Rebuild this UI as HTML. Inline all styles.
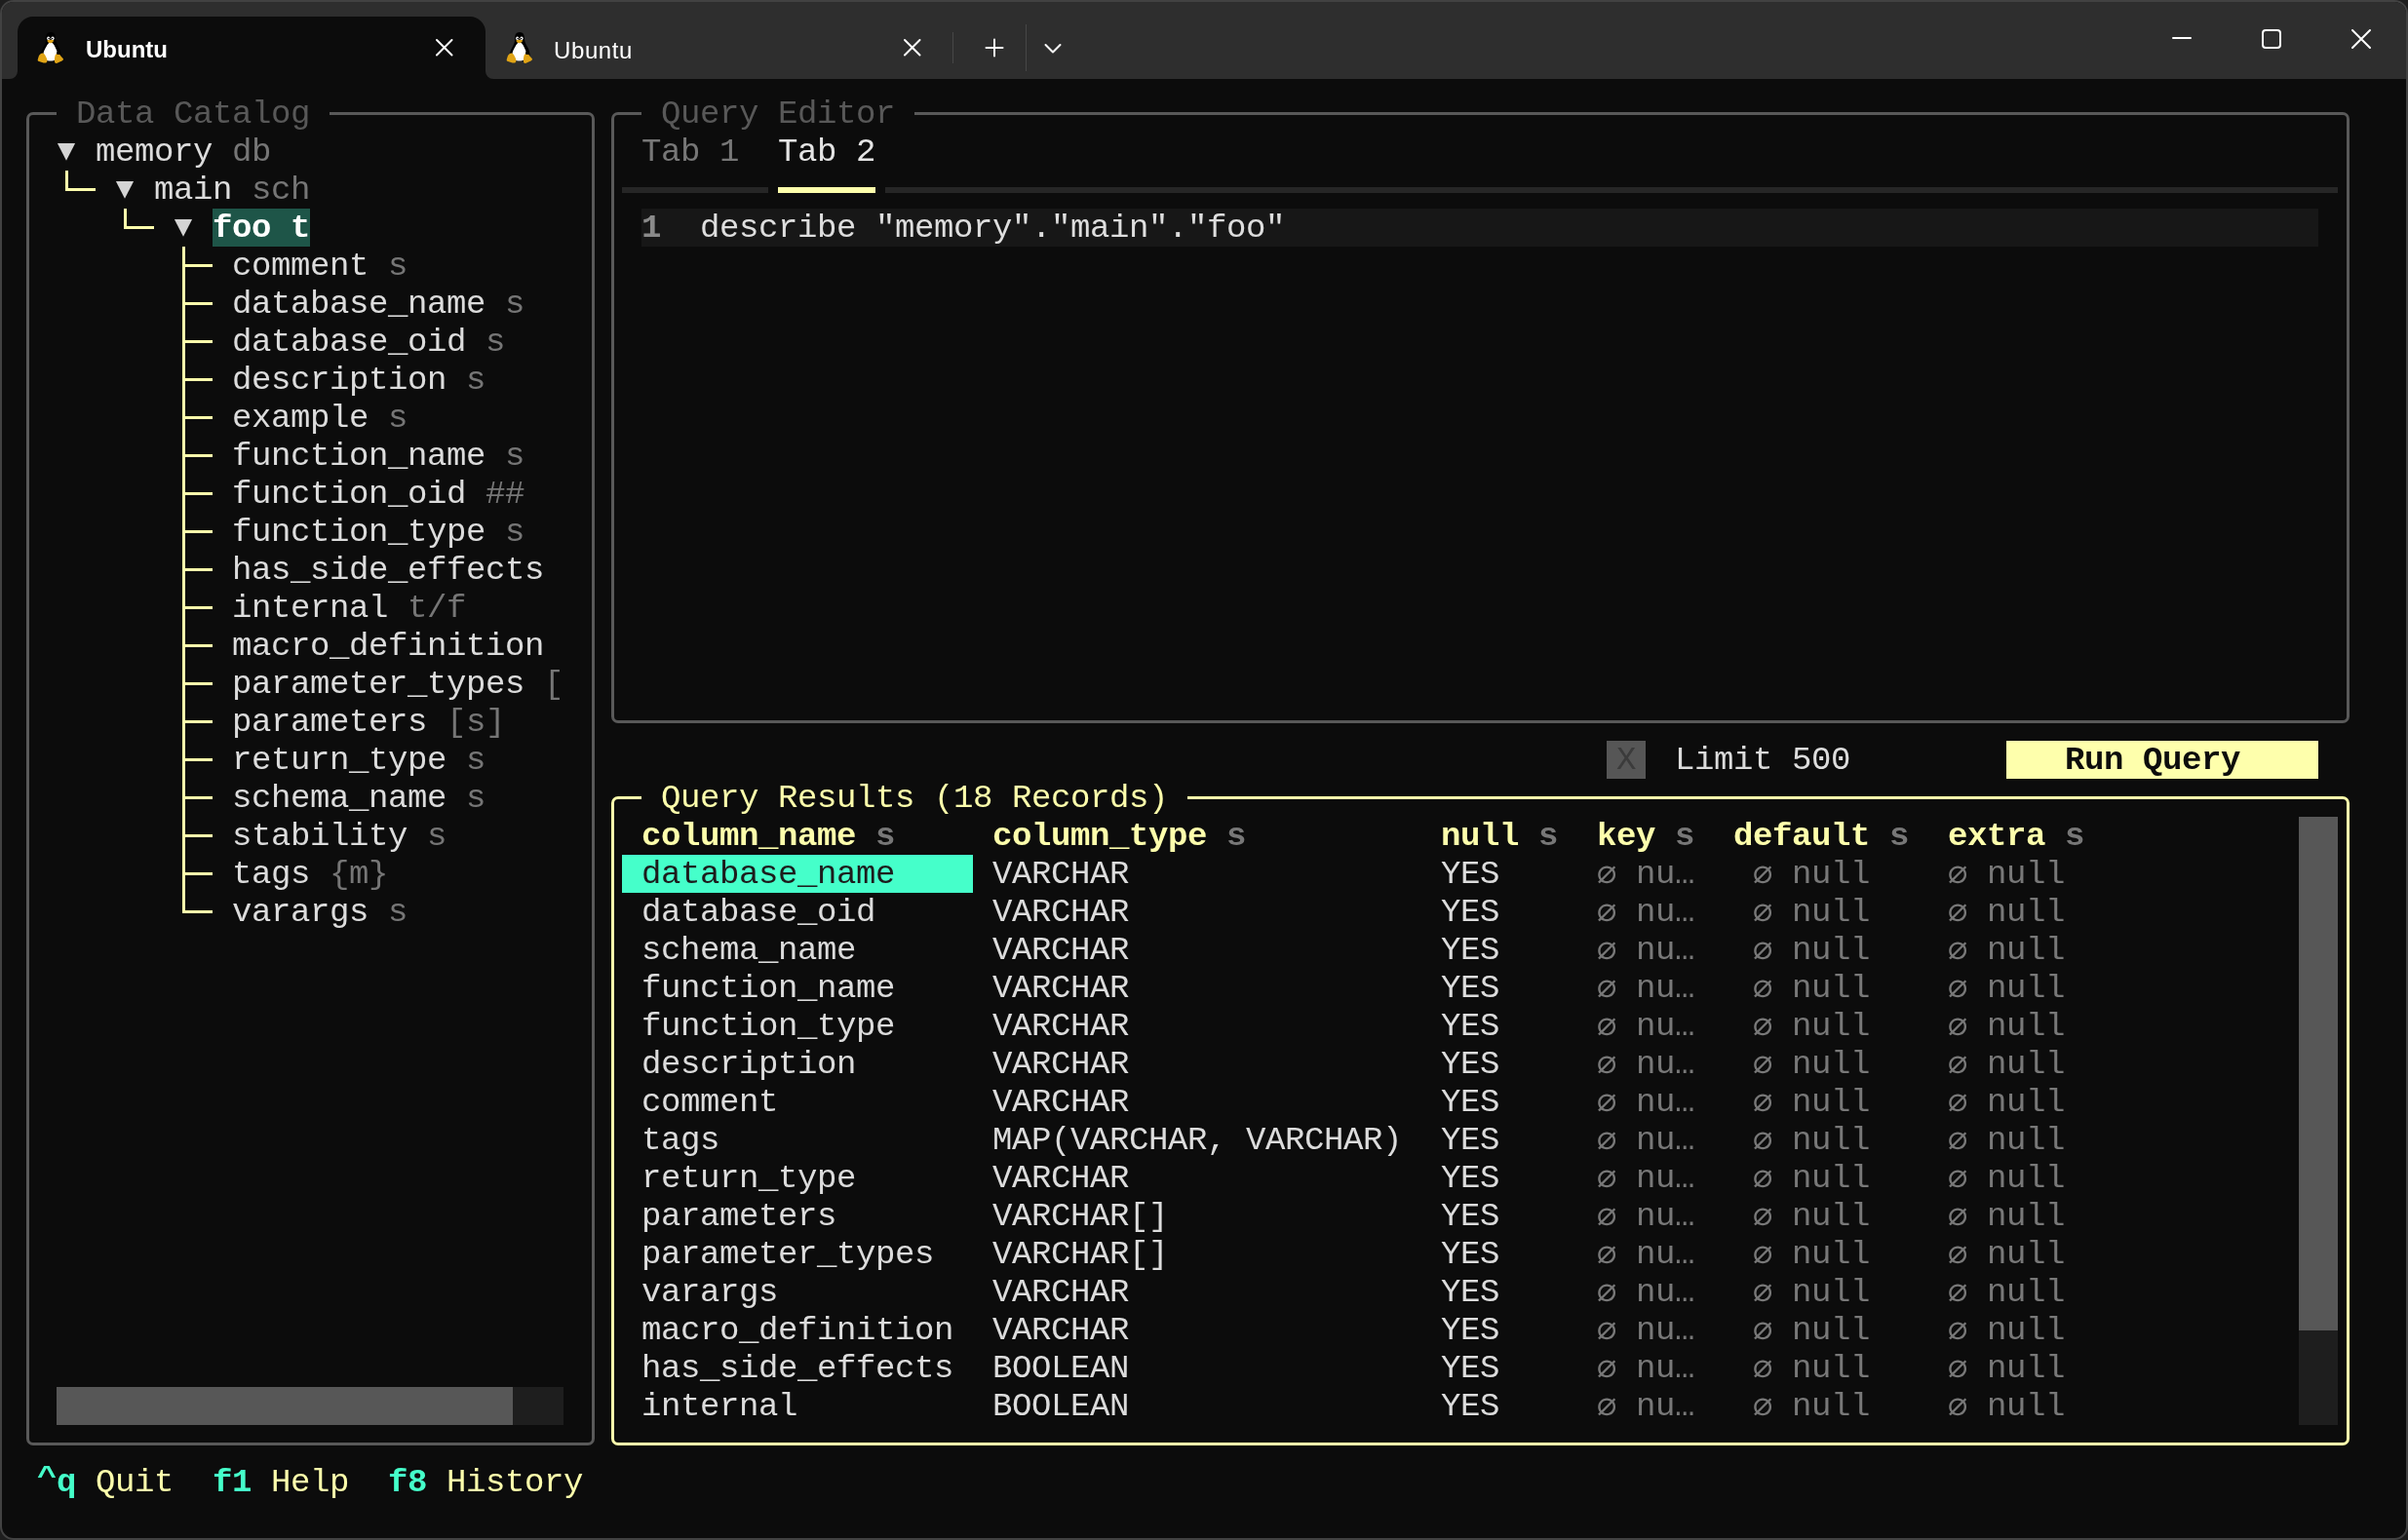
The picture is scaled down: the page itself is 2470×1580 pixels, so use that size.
<!DOCTYPE html>
<html lang="en"><head><meta charset="utf-8"><title>Ubuntu</title>
<style>
html,body{margin:0;padding:0;background:#1e1e1e;}
body{width:2470px;height:1580px;position:relative;overflow:hidden}
#win{position:absolute;left:0;top:0;width:2466px;height:1576px;border:2px solid #424242;border-radius:14px;background:#0c0c0c;overflow:hidden}
#in{position:absolute;left:-2px;top:-2px;width:2470px;height:1580px;will-change:transform}
.r{position:absolute;display:block}
.t{position:absolute;white-space:pre;font-family:"Liberation Mono","DejaVu Sans Mono",monospace;font-size:34px;letter-spacing:-0.4033px;line-height:39px;height:39px;padding-top:0}
.b{font-weight:bold}
.ui{position:absolute;white-space:pre;font-family:"Liberation Sans",sans-serif;font-size:24px;line-height:28px;color:#fff}
</style></head><body>
<div id="win"><div id="in">
<div class="r" style="left:0;top:0;width:2470px;height:81px;background:#2e2e2e"></div>
<div class="r" style="left:18px;top:17px;width:480px;height:70px;background:#0c0c0c;border-radius:16px 16px 0 0"></div>
<svg class="r" style="left:10px;top:73px" width="8" height="8" viewBox="0 0 8 8"><path d="M8 0 L8 8 L0 8 A8 8 0 0 0 8 0 Z" fill="#0c0c0c"/></svg>
<svg class="r" style="left:498px;top:73px" width="8" height="8" viewBox="0 0 8 8"><path d="M0 0 L0 8 L8 8 A8 8 0 0 1 0 0 Z" fill="#0c0c0c"/></svg>
<svg class="r" style="left:36px;top:32px" width="32" height="34" viewBox="0 0 32 34">
<path d="M16 1 C12.5 1 11 3.8 11.2 7.5 C11.4 10.5 10.5 12.5 9 15.5 C7 19 5.3 23 6 27 L12 31 L21 31 L26.5 26.5 C26.9 22 25.5 18.5 23.6 15.5 C22 12.5 21 10.5 21 7.5 C21 3.8 19.5 1 16 1 Z" fill="#000"/>
<path d="M16 11.3 C13 12 11.5 16 9.3 20 C7.8 23.5 8.3 27.5 11 29.5 C13 31 19 31 21 29 C23.5 26.5 23.3 22.5 22 19.5 C20.5 16 19 12 16 11.3 Z" fill="#ffffff"/>
<ellipse cx="13.7" cy="7.3" rx="1.5" ry="1.9" fill="#fff"/><ellipse cx="18" cy="7.3" rx="1.6" ry="1.9" fill="#fff"/>
<circle cx="14.1" cy="7.6" r="0.8" fill="#000"/><circle cx="17.6" cy="7.6" r="0.8" fill="#000"/>
<path d="M12.3 9.6 C14 8.3 17.5 8.3 19.3 9.6 C18.5 11.3 17 12.3 15.5 12.3 C14 12.3 13 11.3 12.3 9.6 Z" fill="#e0a416"/>
<path d="M7 22.6 C9 22.2 10.3 24.2 11.5 27 C12.8 29.5 13 31.6 11.2 32.4 C9.2 33.2 6.5 31.5 4 31 C2 30.6 2.8 28.8 3.3 27.2 C3.8 25.2 5 23.1 7 22.6 Z" fill="#e0a416"/>
<path d="M21.8 23.3 C23.6 22.6 25.5 23.7 26.4 25.6 C27.3 27.3 29.5 28 28.9 29.3 C28.2 30.8 25 31.3 23.2 32.5 C21.3 33.5 19.7 32.5 19.9 30 C20.1 27.5 20.2 24 21.8 23.3 Z" fill="#e0a416"/>
<circle cx="23.6" cy="22.4" r="1.6" fill="#000"/>
</svg>
<span class="ui" style="left:88px;top:37px;font-weight:bold">Ubuntu</span>
<svg class="r" style="left:445.75px;top:38.75px" width="19.5" height="19.5" viewBox="-9.75 -9.75 19.5 19.5"><path d="M-7.75 -7.75 L7.75 7.75 M7.75 -7.75 L-7.75 7.75" stroke="#fff" stroke-width="2" stroke-linecap="round" fill="none"/></svg>
<svg class="r" style="left:517px;top:32px" width="32" height="34" viewBox="0 0 32 34">
<path d="M16 1 C12.5 1 11 3.8 11.2 7.5 C11.4 10.5 10.5 12.5 9 15.5 C7 19 5.3 23 6 27 L12 31 L21 31 L26.5 26.5 C26.9 22 25.5 18.5 23.6 15.5 C22 12.5 21 10.5 21 7.5 C21 3.8 19.5 1 16 1 Z" fill="#000"/>
<path d="M16 11.3 C13 12 11.5 16 9.3 20 C7.8 23.5 8.3 27.5 11 29.5 C13 31 19 31 21 29 C23.5 26.5 23.3 22.5 22 19.5 C20.5 16 19 12 16 11.3 Z" fill="#ffffff"/>
<ellipse cx="13.7" cy="7.3" rx="1.5" ry="1.9" fill="#fff"/><ellipse cx="18" cy="7.3" rx="1.6" ry="1.9" fill="#fff"/>
<circle cx="14.1" cy="7.6" r="0.8" fill="#000"/><circle cx="17.6" cy="7.6" r="0.8" fill="#000"/>
<path d="M12.3 9.6 C14 8.3 17.5 8.3 19.3 9.6 C18.5 11.3 17 12.3 15.5 12.3 C14 12.3 13 11.3 12.3 9.6 Z" fill="#e0a416"/>
<path d="M7 22.6 C9 22.2 10.3 24.2 11.5 27 C12.8 29.5 13 31.6 11.2 32.4 C9.2 33.2 6.5 31.5 4 31 C2 30.6 2.8 28.8 3.3 27.2 C3.8 25.2 5 23.1 7 22.6 Z" fill="#e0a416"/>
<path d="M21.8 23.3 C23.6 22.6 25.5 23.7 26.4 25.6 C27.3 27.3 29.5 28 28.9 29.3 C28.2 30.8 25 31.3 23.2 32.5 C21.3 33.5 19.7 32.5 19.9 30 C20.1 27.5 20.2 24 21.8 23.3 Z" fill="#e0a416"/>
<circle cx="23.6" cy="22.4" r="1.6" fill="#000"/>
</svg>
<span class="ui" style="left:568px;top:38px;letter-spacing:0.6px">Ubuntu</span>
<svg class="r" style="left:925.75px;top:38.75px" width="19.5" height="19.5" viewBox="-9.75 -9.75 19.5 19.5"><path d="M-7.75 -7.75 L7.75 7.75 M7.75 -7.75 L-7.75 7.75" stroke="#fff" stroke-width="2" stroke-linecap="round" fill="none"/></svg>
<div class="r" style="left:977px;top:33px;width:1px;height:32px;background:#474747"></div>
<svg class="r" style="left:1008px;top:37px" width="24" height="24" viewBox="0 0 24 24"><path d="M12 3.5 V20.5 M3.5 12 H20.5" stroke="#fff" stroke-width="2" stroke-linecap="round"/></svg>
<div class="r" style="left:1052px;top:25px;width:1px;height:48px;background:#474747"></div>
<svg class="r" style="left:1068px;top:38px" width="24" height="24" viewBox="0 0 24 24"><path d="M4.5 8 L12 15.5 L19.5 8" stroke="#fff" stroke-width="2" stroke-linecap="round" stroke-linejoin="round" fill="none"/></svg>
<div class="r" style="left:2228px;top:38px;width:20px;height:2px;background:#fff;border-radius:1px"></div>
<div class="r" style="left:2320px;top:30px;width:16px;height:16px;border:2px solid #fff;border-radius:4px"></div>
<svg class="r" style="left:2411.0px;top:29.0px" width="22" height="22" viewBox="-11.0 -11.0 22 22"><path d="M-9.0 -9.0 L9.0 9.0 M9.0 -9.0 L-9.0 9.0" stroke="#fff" stroke-width="2" stroke-linecap="round" fill="none"/></svg>
<div class="r" style="left:27px;top:115px;width:577px;height:1362px;border:3px solid #595959;border-radius:7px"></div>
<div class="r" style="left:58px;top:113px;width:280px;height:7px;background:#0c0c0c;"></div>
<span class="t" style="left:78px;top:98px;color:#585858;">Data Catalog</span>
<svg class="r" style="left:58px;top:136px" width="20" height="39" viewBox="0 0 20 39"><path d="M0.9 11 L19.1 11 L10 28.8 Z" fill="#d4d4d4"/></svg>
<span class="t" style="left:98px;top:137px;color:#dcdcdc;">memory</span>
<span class="t" style="left:238px;top:137px;color:#767676;">db</span>
<div class="r" style="left:67px;top:175px;width:3px;height:21px;background:#feffac;"></div>
<div class="r" style="left:67px;top:193px;width:31px;height:3px;background:#feffac;"></div>
<svg class="r" style="left:118px;top:175px" width="20" height="39" viewBox="0 0 20 39"><path d="M0.9 11 L19.1 11 L10 28.8 Z" fill="#d4d4d4"/></svg>
<span class="t" style="left:158px;top:176px;color:#dcdcdc;">main</span>
<span class="t" style="left:258px;top:176px;color:#767676;">sch</span>
<div class="r" style="left:127px;top:214px;width:3px;height:21px;background:#feffac;"></div>
<div class="r" style="left:127px;top:232px;width:31px;height:3px;background:#feffac;"></div>
<svg class="r" style="left:178px;top:214px" width="20" height="39" viewBox="0 0 20 39"><path d="M0.9 11 L19.1 11 L10 28.8 Z" fill="#d4d4d4"/></svg>
<div class="r" style="left:218px;top:214px;width:100px;height:39px;background:#1e5548;"></div>
<span class="t b" style="left:218px;top:215px;color:#ffffff;">foo t</span>
<div class="r" style="left:187px;top:253px;width:3px;height:39px;background:#feffac;"></div>
<div class="r" style="left:187px;top:271px;width:31px;height:3px;background:#feffac;"></div>
<span class="t" style="left:238px;top:254px;color:#dcdcdc;">comment</span>
<span class="t" style="left:398px;top:254px;color:#767676;">s</span>
<div class="r" style="left:187px;top:292px;width:3px;height:39px;background:#feffac;"></div>
<div class="r" style="left:187px;top:310px;width:31px;height:3px;background:#feffac;"></div>
<span class="t" style="left:238px;top:293px;color:#dcdcdc;">database_name</span>
<span class="t" style="left:518px;top:293px;color:#767676;">s</span>
<div class="r" style="left:187px;top:331px;width:3px;height:39px;background:#feffac;"></div>
<div class="r" style="left:187px;top:349px;width:31px;height:3px;background:#feffac;"></div>
<span class="t" style="left:238px;top:332px;color:#dcdcdc;">database_oid</span>
<span class="t" style="left:498px;top:332px;color:#767676;">s</span>
<div class="r" style="left:187px;top:370px;width:3px;height:39px;background:#feffac;"></div>
<div class="r" style="left:187px;top:388px;width:31px;height:3px;background:#feffac;"></div>
<span class="t" style="left:238px;top:371px;color:#dcdcdc;">description</span>
<span class="t" style="left:478px;top:371px;color:#767676;">s</span>
<div class="r" style="left:187px;top:409px;width:3px;height:39px;background:#feffac;"></div>
<div class="r" style="left:187px;top:427px;width:31px;height:3px;background:#feffac;"></div>
<span class="t" style="left:238px;top:410px;color:#dcdcdc;">example</span>
<span class="t" style="left:398px;top:410px;color:#767676;">s</span>
<div class="r" style="left:187px;top:448px;width:3px;height:39px;background:#feffac;"></div>
<div class="r" style="left:187px;top:466px;width:31px;height:3px;background:#feffac;"></div>
<span class="t" style="left:238px;top:449px;color:#dcdcdc;">function_name</span>
<span class="t" style="left:518px;top:449px;color:#767676;">s</span>
<div class="r" style="left:187px;top:487px;width:3px;height:39px;background:#feffac;"></div>
<div class="r" style="left:187px;top:505px;width:31px;height:3px;background:#feffac;"></div>
<span class="t" style="left:238px;top:488px;color:#dcdcdc;">function_oid</span>
<span class="t" style="left:498px;top:488px;color:#767676;">##</span>
<div class="r" style="left:187px;top:526px;width:3px;height:39px;background:#feffac;"></div>
<div class="r" style="left:187px;top:544px;width:31px;height:3px;background:#feffac;"></div>
<span class="t" style="left:238px;top:527px;color:#dcdcdc;">function_type</span>
<span class="t" style="left:518px;top:527px;color:#767676;">s</span>
<div class="r" style="left:187px;top:565px;width:3px;height:39px;background:#feffac;"></div>
<div class="r" style="left:187px;top:583px;width:31px;height:3px;background:#feffac;"></div>
<span class="t" style="left:238px;top:566px;color:#dcdcdc;">has_side_effects</span>
<div class="r" style="left:187px;top:604px;width:3px;height:39px;background:#feffac;"></div>
<div class="r" style="left:187px;top:622px;width:31px;height:3px;background:#feffac;"></div>
<span class="t" style="left:238px;top:605px;color:#dcdcdc;">internal</span>
<span class="t" style="left:418px;top:605px;color:#767676;">t/f</span>
<div class="r" style="left:187px;top:643px;width:3px;height:39px;background:#feffac;"></div>
<div class="r" style="left:187px;top:661px;width:31px;height:3px;background:#feffac;"></div>
<span class="t" style="left:238px;top:644px;color:#dcdcdc;">macro_definition</span>
<div class="r" style="left:187px;top:682px;width:3px;height:39px;background:#feffac;"></div>
<div class="r" style="left:187px;top:700px;width:31px;height:3px;background:#feffac;"></div>
<span class="t" style="left:238px;top:683px;color:#dcdcdc;">parameter_types</span>
<span class="t" style="left:558px;top:683px;color:#767676;">[</span>
<div class="r" style="left:187px;top:721px;width:3px;height:39px;background:#feffac;"></div>
<div class="r" style="left:187px;top:739px;width:31px;height:3px;background:#feffac;"></div>
<span class="t" style="left:238px;top:722px;color:#dcdcdc;">parameters</span>
<span class="t" style="left:458px;top:722px;color:#767676;">[s]</span>
<div class="r" style="left:187px;top:760px;width:3px;height:39px;background:#feffac;"></div>
<div class="r" style="left:187px;top:778px;width:31px;height:3px;background:#feffac;"></div>
<span class="t" style="left:238px;top:761px;color:#dcdcdc;">return_type</span>
<span class="t" style="left:478px;top:761px;color:#767676;">s</span>
<div class="r" style="left:187px;top:799px;width:3px;height:39px;background:#feffac;"></div>
<div class="r" style="left:187px;top:817px;width:31px;height:3px;background:#feffac;"></div>
<span class="t" style="left:238px;top:800px;color:#dcdcdc;">schema_name</span>
<span class="t" style="left:478px;top:800px;color:#767676;">s</span>
<div class="r" style="left:187px;top:838px;width:3px;height:39px;background:#feffac;"></div>
<div class="r" style="left:187px;top:856px;width:31px;height:3px;background:#feffac;"></div>
<span class="t" style="left:238px;top:839px;color:#dcdcdc;">stability</span>
<span class="t" style="left:438px;top:839px;color:#767676;">s</span>
<div class="r" style="left:187px;top:877px;width:3px;height:39px;background:#feffac;"></div>
<div class="r" style="left:187px;top:895px;width:31px;height:3px;background:#feffac;"></div>
<span class="t" style="left:238px;top:878px;color:#dcdcdc;">tags</span>
<span class="t" style="left:338px;top:878px;color:#767676;">{m}</span>
<div class="r" style="left:187px;top:916px;width:3px;height:21px;background:#feffac;"></div>
<div class="r" style="left:187px;top:934px;width:31px;height:3px;background:#feffac;"></div>
<span class="t" style="left:238px;top:917px;color:#dcdcdc;">varargs</span>
<span class="t" style="left:398px;top:917px;color:#767676;">s</span>
<div class="r" style="left:58px;top:1423px;width:520px;height:39px;background:#1e1e1e;"></div>
<div class="r" style="left:58px;top:1423px;width:468px;height:39px;background:#575757;"></div>
<div class="r" style="left:627px;top:115px;width:1777px;height:621px;border:3px solid #595959;border-radius:7px"></div>
<div class="r" style="left:658px;top:113px;width:280px;height:7px;background:#0c0c0c;"></div>
<span class="t" style="left:678px;top:98px;color:#585858;">Query Editor</span>
<span class="t" style="left:658px;top:137px;color:#777777;">Tab 1</span>
<span class="t" style="left:798px;top:137px;color:#e4e4e4;">Tab 2</span>
<div class="r" style="left:638px;top:192px;width:150px;height:6px;background:#262626;"></div>
<div class="r" style="left:798px;top:192px;width:100px;height:6px;background:#feffac;"></div>
<div class="r" style="left:908px;top:192px;width:1490px;height:6px;background:#262626;"></div>
<div class="r" style="left:658px;top:214px;width:1720px;height:39px;background:#171717;"></div>
<span class="t b" style="left:658px;top:215px;color:#8a8a8a;">1</span>
<span class="t" style="left:718px;top:215px;color:#dedede;">describe "memory"."main"."foo"</span>
<div class="r" style="left:1648px;top:760px;width:40px;height:39px;background:#565656;"></div>
<span class="t" style="left:1658px;top:761px;color:#3b3b3b;">X</span>
<span class="t" style="left:1718px;top:761px;color:#dcdcdc;">Limit 500</span>
<div class="r" style="left:2058px;top:760px;width:320px;height:39px;background:#feffac;"></div>
<span class="t b" style="left:2118px;top:761px;color:#0c0c0c;">Run Query</span>
<div class="r" style="left:627px;top:817px;width:1777px;height:660px;border:3px solid #feffac;border-radius:7px"></div>
<div class="r" style="left:658px;top:815px;width:560px;height:7px;background:#0c0c0c;"></div>
<span class="t" style="left:678px;top:800px;color:#feffac;">Query Results (18 Records)</span>
<span class="t b" style="left:658px;top:839px;color:#feffac;">column_name</span>
<span class="t b" style="left:898px;top:839px;color:#777777;">s</span>
<span class="t b" style="left:1018px;top:839px;color:#feffac;">column_type</span>
<span class="t b" style="left:1258px;top:839px;color:#777777;">s</span>
<span class="t b" style="left:1478px;top:839px;color:#feffac;">null</span>
<span class="t b" style="left:1578px;top:839px;color:#777777;">s</span>
<span class="t b" style="left:1638px;top:839px;color:#feffac;">key</span>
<span class="t b" style="left:1718px;top:839px;color:#777777;">s</span>
<span class="t b" style="left:1778px;top:839px;color:#feffac;">default</span>
<span class="t b" style="left:1938px;top:839px;color:#777777;">s</span>
<span class="t b" style="left:1998px;top:839px;color:#feffac;">extra</span>
<span class="t b" style="left:2118px;top:839px;color:#777777;">s</span>
<div class="r" style="left:638px;top:877px;width:360px;height:39px;background:#45ffca;"></div>
<span class="t" style="left:658px;top:878px;color:#1c1c1c;">database_name</span>
<span class="t" style="left:1018px;top:878px;color:#dcdcdc;">VARCHAR</span>
<span class="t" style="left:1478px;top:878px;color:#dcdcdc;">YES</span>
<span class="t" style="left:1638px;top:878px;color:#787878;margin-top:2px;">∅</span>
<span class="t" style="left:1678px;top:878px;color:#787878;">nu…</span>
<span class="t" style="left:1798px;top:878px;color:#787878;margin-top:2px;">∅</span>
<span class="t" style="left:1838px;top:878px;color:#787878;">null</span>
<span class="t" style="left:1998px;top:878px;color:#787878;margin-top:2px;">∅</span>
<span class="t" style="left:2038px;top:878px;color:#787878;">null</span>
<span class="t" style="left:658px;top:917px;color:#dcdcdc;">database_oid</span>
<span class="t" style="left:1018px;top:917px;color:#dcdcdc;">VARCHAR</span>
<span class="t" style="left:1478px;top:917px;color:#dcdcdc;">YES</span>
<span class="t" style="left:1638px;top:917px;color:#787878;margin-top:2px;">∅</span>
<span class="t" style="left:1678px;top:917px;color:#787878;">nu…</span>
<span class="t" style="left:1798px;top:917px;color:#787878;margin-top:2px;">∅</span>
<span class="t" style="left:1838px;top:917px;color:#787878;">null</span>
<span class="t" style="left:1998px;top:917px;color:#787878;margin-top:2px;">∅</span>
<span class="t" style="left:2038px;top:917px;color:#787878;">null</span>
<span class="t" style="left:658px;top:956px;color:#dcdcdc;">schema_name</span>
<span class="t" style="left:1018px;top:956px;color:#dcdcdc;">VARCHAR</span>
<span class="t" style="left:1478px;top:956px;color:#dcdcdc;">YES</span>
<span class="t" style="left:1638px;top:956px;color:#787878;margin-top:2px;">∅</span>
<span class="t" style="left:1678px;top:956px;color:#787878;">nu…</span>
<span class="t" style="left:1798px;top:956px;color:#787878;margin-top:2px;">∅</span>
<span class="t" style="left:1838px;top:956px;color:#787878;">null</span>
<span class="t" style="left:1998px;top:956px;color:#787878;margin-top:2px;">∅</span>
<span class="t" style="left:2038px;top:956px;color:#787878;">null</span>
<span class="t" style="left:658px;top:995px;color:#dcdcdc;">function_name</span>
<span class="t" style="left:1018px;top:995px;color:#dcdcdc;">VARCHAR</span>
<span class="t" style="left:1478px;top:995px;color:#dcdcdc;">YES</span>
<span class="t" style="left:1638px;top:995px;color:#787878;margin-top:2px;">∅</span>
<span class="t" style="left:1678px;top:995px;color:#787878;">nu…</span>
<span class="t" style="left:1798px;top:995px;color:#787878;margin-top:2px;">∅</span>
<span class="t" style="left:1838px;top:995px;color:#787878;">null</span>
<span class="t" style="left:1998px;top:995px;color:#787878;margin-top:2px;">∅</span>
<span class="t" style="left:2038px;top:995px;color:#787878;">null</span>
<span class="t" style="left:658px;top:1034px;color:#dcdcdc;">function_type</span>
<span class="t" style="left:1018px;top:1034px;color:#dcdcdc;">VARCHAR</span>
<span class="t" style="left:1478px;top:1034px;color:#dcdcdc;">YES</span>
<span class="t" style="left:1638px;top:1034px;color:#787878;margin-top:2px;">∅</span>
<span class="t" style="left:1678px;top:1034px;color:#787878;">nu…</span>
<span class="t" style="left:1798px;top:1034px;color:#787878;margin-top:2px;">∅</span>
<span class="t" style="left:1838px;top:1034px;color:#787878;">null</span>
<span class="t" style="left:1998px;top:1034px;color:#787878;margin-top:2px;">∅</span>
<span class="t" style="left:2038px;top:1034px;color:#787878;">null</span>
<span class="t" style="left:658px;top:1073px;color:#dcdcdc;">description</span>
<span class="t" style="left:1018px;top:1073px;color:#dcdcdc;">VARCHAR</span>
<span class="t" style="left:1478px;top:1073px;color:#dcdcdc;">YES</span>
<span class="t" style="left:1638px;top:1073px;color:#787878;margin-top:2px;">∅</span>
<span class="t" style="left:1678px;top:1073px;color:#787878;">nu…</span>
<span class="t" style="left:1798px;top:1073px;color:#787878;margin-top:2px;">∅</span>
<span class="t" style="left:1838px;top:1073px;color:#787878;">null</span>
<span class="t" style="left:1998px;top:1073px;color:#787878;margin-top:2px;">∅</span>
<span class="t" style="left:2038px;top:1073px;color:#787878;">null</span>
<span class="t" style="left:658px;top:1112px;color:#dcdcdc;">comment</span>
<span class="t" style="left:1018px;top:1112px;color:#dcdcdc;">VARCHAR</span>
<span class="t" style="left:1478px;top:1112px;color:#dcdcdc;">YES</span>
<span class="t" style="left:1638px;top:1112px;color:#787878;margin-top:2px;">∅</span>
<span class="t" style="left:1678px;top:1112px;color:#787878;">nu…</span>
<span class="t" style="left:1798px;top:1112px;color:#787878;margin-top:2px;">∅</span>
<span class="t" style="left:1838px;top:1112px;color:#787878;">null</span>
<span class="t" style="left:1998px;top:1112px;color:#787878;margin-top:2px;">∅</span>
<span class="t" style="left:2038px;top:1112px;color:#787878;">null</span>
<span class="t" style="left:658px;top:1151px;color:#dcdcdc;">tags</span>
<span class="t" style="left:1018px;top:1151px;color:#dcdcdc;">MAP(VARCHAR, VARCHAR)</span>
<span class="t" style="left:1478px;top:1151px;color:#dcdcdc;">YES</span>
<span class="t" style="left:1638px;top:1151px;color:#787878;margin-top:2px;">∅</span>
<span class="t" style="left:1678px;top:1151px;color:#787878;">nu…</span>
<span class="t" style="left:1798px;top:1151px;color:#787878;margin-top:2px;">∅</span>
<span class="t" style="left:1838px;top:1151px;color:#787878;">null</span>
<span class="t" style="left:1998px;top:1151px;color:#787878;margin-top:2px;">∅</span>
<span class="t" style="left:2038px;top:1151px;color:#787878;">null</span>
<span class="t" style="left:658px;top:1190px;color:#dcdcdc;">return_type</span>
<span class="t" style="left:1018px;top:1190px;color:#dcdcdc;">VARCHAR</span>
<span class="t" style="left:1478px;top:1190px;color:#dcdcdc;">YES</span>
<span class="t" style="left:1638px;top:1190px;color:#787878;margin-top:2px;">∅</span>
<span class="t" style="left:1678px;top:1190px;color:#787878;">nu…</span>
<span class="t" style="left:1798px;top:1190px;color:#787878;margin-top:2px;">∅</span>
<span class="t" style="left:1838px;top:1190px;color:#787878;">null</span>
<span class="t" style="left:1998px;top:1190px;color:#787878;margin-top:2px;">∅</span>
<span class="t" style="left:2038px;top:1190px;color:#787878;">null</span>
<span class="t" style="left:658px;top:1229px;color:#dcdcdc;">parameters</span>
<span class="t" style="left:1018px;top:1229px;color:#dcdcdc;">VARCHAR[]</span>
<span class="t" style="left:1478px;top:1229px;color:#dcdcdc;">YES</span>
<span class="t" style="left:1638px;top:1229px;color:#787878;margin-top:2px;">∅</span>
<span class="t" style="left:1678px;top:1229px;color:#787878;">nu…</span>
<span class="t" style="left:1798px;top:1229px;color:#787878;margin-top:2px;">∅</span>
<span class="t" style="left:1838px;top:1229px;color:#787878;">null</span>
<span class="t" style="left:1998px;top:1229px;color:#787878;margin-top:2px;">∅</span>
<span class="t" style="left:2038px;top:1229px;color:#787878;">null</span>
<span class="t" style="left:658px;top:1268px;color:#dcdcdc;">parameter_types</span>
<span class="t" style="left:1018px;top:1268px;color:#dcdcdc;">VARCHAR[]</span>
<span class="t" style="left:1478px;top:1268px;color:#dcdcdc;">YES</span>
<span class="t" style="left:1638px;top:1268px;color:#787878;margin-top:2px;">∅</span>
<span class="t" style="left:1678px;top:1268px;color:#787878;">nu…</span>
<span class="t" style="left:1798px;top:1268px;color:#787878;margin-top:2px;">∅</span>
<span class="t" style="left:1838px;top:1268px;color:#787878;">null</span>
<span class="t" style="left:1998px;top:1268px;color:#787878;margin-top:2px;">∅</span>
<span class="t" style="left:2038px;top:1268px;color:#787878;">null</span>
<span class="t" style="left:658px;top:1307px;color:#dcdcdc;">varargs</span>
<span class="t" style="left:1018px;top:1307px;color:#dcdcdc;">VARCHAR</span>
<span class="t" style="left:1478px;top:1307px;color:#dcdcdc;">YES</span>
<span class="t" style="left:1638px;top:1307px;color:#787878;margin-top:2px;">∅</span>
<span class="t" style="left:1678px;top:1307px;color:#787878;">nu…</span>
<span class="t" style="left:1798px;top:1307px;color:#787878;margin-top:2px;">∅</span>
<span class="t" style="left:1838px;top:1307px;color:#787878;">null</span>
<span class="t" style="left:1998px;top:1307px;color:#787878;margin-top:2px;">∅</span>
<span class="t" style="left:2038px;top:1307px;color:#787878;">null</span>
<span class="t" style="left:658px;top:1346px;color:#dcdcdc;">macro_definition</span>
<span class="t" style="left:1018px;top:1346px;color:#dcdcdc;">VARCHAR</span>
<span class="t" style="left:1478px;top:1346px;color:#dcdcdc;">YES</span>
<span class="t" style="left:1638px;top:1346px;color:#787878;margin-top:2px;">∅</span>
<span class="t" style="left:1678px;top:1346px;color:#787878;">nu…</span>
<span class="t" style="left:1798px;top:1346px;color:#787878;margin-top:2px;">∅</span>
<span class="t" style="left:1838px;top:1346px;color:#787878;">null</span>
<span class="t" style="left:1998px;top:1346px;color:#787878;margin-top:2px;">∅</span>
<span class="t" style="left:2038px;top:1346px;color:#787878;">null</span>
<span class="t" style="left:658px;top:1385px;color:#dcdcdc;">has_side_effects</span>
<span class="t" style="left:1018px;top:1385px;color:#dcdcdc;">BOOLEAN</span>
<span class="t" style="left:1478px;top:1385px;color:#dcdcdc;">YES</span>
<span class="t" style="left:1638px;top:1385px;color:#787878;margin-top:2px;">∅</span>
<span class="t" style="left:1678px;top:1385px;color:#787878;">nu…</span>
<span class="t" style="left:1798px;top:1385px;color:#787878;margin-top:2px;">∅</span>
<span class="t" style="left:1838px;top:1385px;color:#787878;">null</span>
<span class="t" style="left:1998px;top:1385px;color:#787878;margin-top:2px;">∅</span>
<span class="t" style="left:2038px;top:1385px;color:#787878;">null</span>
<span class="t" style="left:658px;top:1424px;color:#dcdcdc;">internal</span>
<span class="t" style="left:1018px;top:1424px;color:#dcdcdc;">BOOLEAN</span>
<span class="t" style="left:1478px;top:1424px;color:#dcdcdc;">YES</span>
<span class="t" style="left:1638px;top:1424px;color:#787878;margin-top:2px;">∅</span>
<span class="t" style="left:1678px;top:1424px;color:#787878;">nu…</span>
<span class="t" style="left:1798px;top:1424px;color:#787878;margin-top:2px;">∅</span>
<span class="t" style="left:1838px;top:1424px;color:#787878;">null</span>
<span class="t" style="left:1998px;top:1424px;color:#787878;margin-top:2px;">∅</span>
<span class="t" style="left:2038px;top:1424px;color:#787878;">null</span>
<div class="r" style="left:2358px;top:838px;width:40px;height:624px;background:#1e1e1e;"></div>
<div class="r" style="left:2358px;top:838px;width:40px;height:527px;background:#575757;"></div>
<span class="t b" style="left:38px;top:1502px;color:#45ffca;transform:translateY(-5px) scaleY(0.8);transform-origin:50% 40%;">^</span>
<span class="t b" style="left:58px;top:1502px;color:#45ffca;">q</span>
<span class="t" style="left:98px;top:1502px;color:#feffac;">Quit</span>
<span class="t b" style="left:218px;top:1502px;color:#45ffca;">f1</span>
<span class="t" style="left:278px;top:1502px;color:#feffac;">Help</span>
<span class="t b" style="left:398px;top:1502px;color:#45ffca;">f8</span>
<span class="t" style="left:458px;top:1502px;color:#feffac;">History</span>
</div></div>
</body></html>
